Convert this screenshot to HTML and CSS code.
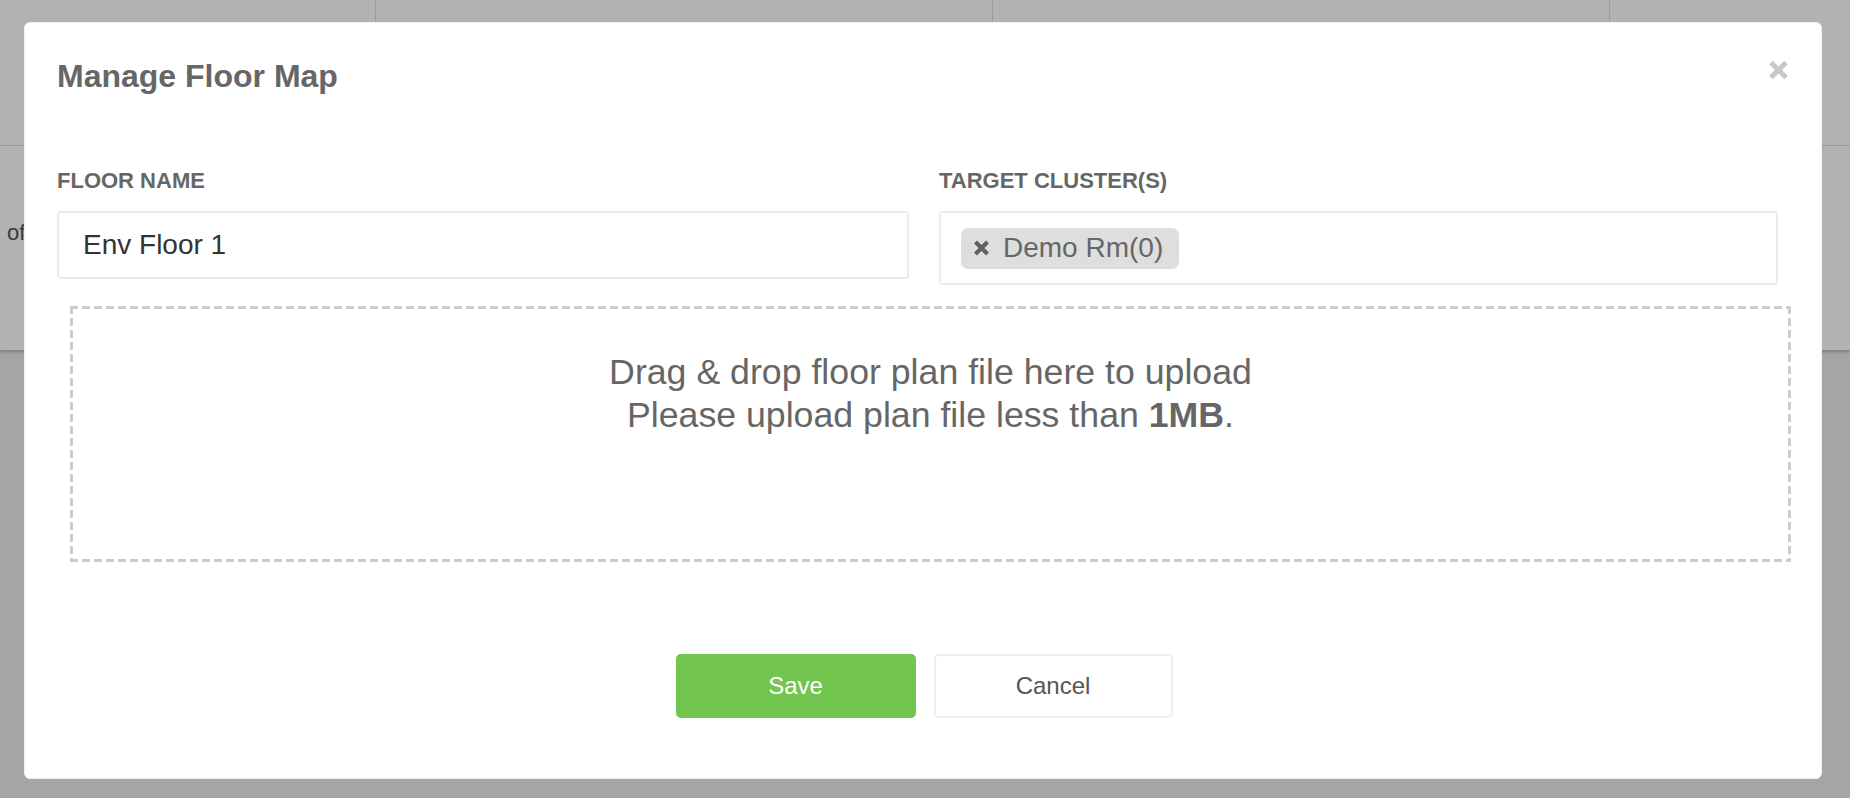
FILE: index.html
```html
<!DOCTYPE html>
<html lang="en">
<head>
<meta charset="utf-8">
<title>Manage Floor Map</title>
<link rel="stylesheet" href="styles.css">
</head>
<body>
<div class="page">
  <div class="card">
    <div class="card-head">
      <div class="cell c1"></div>
      <div class="cell c2"></div>
      <div class="cell c3"></div>
      <div class="cell c4"></div>
    </div>
    <div class="card-body">
      <span class="faded">of</span>
    </div>
  </div>
</div>
<div class="backdrop"></div>
<div class="modal">
  <div class="modal-header">
    <h2 class="modal-title">Manage Floor Map</h2>
    <button class="close" type="button" aria-label="Close">
      <svg width="21" height="20" viewBox="0 0 21 20"><path d="M3 2.5 L18 17.5 M18 2.5 L3 17.5" stroke="#c8c8c8" stroke-width="5" fill="none"/></svg>
    </button>
  </div>
  <div class="form-row">
    <div class="field">
      <label class="label">FLOOR NAME</label>
      <div class="input">Env Floor 1</div>
    </div>
    <div class="field">
      <label class="label">TARGET CLUSTER(S)</label>
      <div class="input tags">
        <span class="chip">
          <svg class="chip-x" width="17" height="16" viewBox="0 0 17 16"><path d="M2.5 2 L14.5 14 M14.5 2 L2.5 14" stroke="#606060" stroke-width="4" fill="none"/></svg>
          <span>Demo Rm(0)</span>
        </span>
      </div>
    </div>
  </div>
  <div class="dropzone">
    <p>Drag &amp; drop floor plan file here to upload</p>
    <p>Please upload plan file less than <b>1MB</b>.</p>
  </div>
  <div class="actions">
    <button class="btn btn-save" type="button">Save</button>
    <button class="btn btn-cancel" type="button">Cancel</button>
  </div>
</div>
</body>
</html>
```

FILE: styles.css
```css
* { box-sizing: border-box; }
html, body { margin: 0; padding: 0; }
body {
  width: 1850px;
  height: 798px;
  overflow: hidden;
  background: #ececec;
  font-family: "Liberation Sans", Arial, Helvetica, sans-serif;
  position: relative;
}
.page { width: 100%; }
.card {
  background: #fff;
  height: 350px;
  box-shadow: 0 2px 3px rgba(0,0,0,0.25);
}
.card-head {
  display: flex;
  height: 146px;
  border-bottom: 1px solid #dedede;
}
.cell { border-right: 1px solid #dedede; height: 100%; }
.c1 { width: 376px; }
.c2 { width: 617px; }
.c3 { width: 617px; }
.c4 { flex: 1; border-right: none; }
.card-body { padding: 74px 0 0 7px; }
.faded { font-size: 22px; color: #555; }

.backdrop {
  position: absolute;
  inset: 0;
  background: rgba(0,0,0,0.3);
}

.modal {
  position: absolute;
  left: 24px;
  top: 22px;
  width: 1798px;
  background: #fff;
  border: 1px solid #eef2f2;
  border-radius: 6px;
  padding: 35px 30px 60px 32px;
}
.modal-header {
  display: flex;
  justify-content: space-between;
  align-items: flex-start;
}
.modal-title {
  margin: 0;
  font-size: 32px;
  line-height: 37px;
  font-weight: bold;
  color: #666;
}
.close {
  border: 0;
  background: none;
  padding: 0;
  margin: 2px 2px 0 0;
  width: 21px;
  height: 20px;
  display: block;
}
.close svg { display: block; }

.form-row {
  display: grid;
  grid-template-columns: 852px 839px;
  column-gap: 30px;
  margin-top: 73px;
  align-items: start;
}
.label {
  display: block;
  font-size: 22px;
  line-height: 25px;
  font-weight: bold;
  color: #666;
  margin-bottom: 18px;
}
.input {
  border: 2px solid #ebebeb;
  border-radius: 4px;
  height: 68px;
  padding: 0 24px;
  display: flex;
  align-items: center;
  font-size: 28px;
  color: #333;
}
.input.tags {
  height: 74px;
  padding: 0 20px;
}
.chip {
  display: inline-flex;
  align-items: center;
  height: 41px;
  background: #dedede;
  border-radius: 7px;
  padding: 0 16px 0 12px;
  font-size: 28px;
  color: #666;
  gap: 13px;
}
.chip-x { display: block; }

.dropzone {
  margin: 21px 0 0 13px;
  height: 256px;
  padding-top: 45px;
  text-align: center;
  color: #666;
  font-size: 35.7px;
  line-height: 43px;
  background:
    repeating-linear-gradient(90deg, #cccccc 0 8px, transparent 8px 12px) left top / 100% 3px no-repeat,
    repeating-linear-gradient(90deg, #cccccc 0 8px, transparent 8px 12px) left bottom / 100% 3px no-repeat,
    repeating-linear-gradient(180deg, #cccccc 0 8px, transparent 8px 12px) left top / 3px 100% no-repeat,
    repeating-linear-gradient(180deg, #cccccc 0 8px, transparent 8px 12px) right top / 3px 100% no-repeat;
}
.dropzone p { margin: 0; }
.dropzone b { color: #666; }

.actions {
  display: flex;
  justify-content: center;
  gap: 18px;
  margin-top: 92px;
}
.btn {
  width: 240px;
  height: 64px;
  border-radius: 5px;
  font-family: "Liberation Sans", Arial, sans-serif;
  font-size: 24px;
  cursor: pointer;
}
.btn-save {
  background: #72c650;
  border: 0;
  color: #fff;
}
.btn-cancel {
  width: 239px;
  background: #fff;
  border: 2px solid #eeeeee;
  color: #555;
}
```
